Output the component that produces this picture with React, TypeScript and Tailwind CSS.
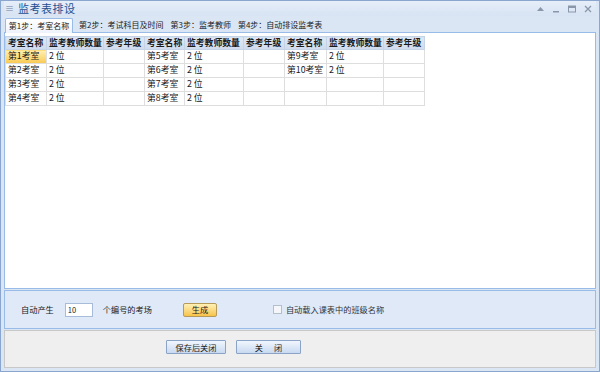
import React from "react";

const font = "font-['SimSun','Noto_Sans_CJK_SC',sans-serif]";

const cols = [41, 57, 41, 40, 59, 41, 42, 57, 41];
const heads = ["考室名称", "监考教师数量", "参考年级"];

const rows: string[][] = [
  ["第1考室", "2 位", "", "第5考室", "2 位", "", "第9考室", "2 位", ""],
  ["第2考室", "2 位", "", "第6考室", "2 位", "", "第10考室", "2 位", ""],
  ["第3考室", "2 位", "", "第7考室", "2 位", "", "", "", ""],
  ["第4考室", "2 位", "", "第8考室", "2 位", "", "", "", ""],
];

const tabs = ["第2步：考试科目及时间", "第3步：监考教师", "第4步：自动排设监考表"];

export default function App() {
  return (
    <div
      className={`w-[600px] h-[372px] flex flex-col px-[3px] pb-[3px] border border-[#8aa6cf] bg-[#dbe6f4] text-[#1a1a1a] ${font}`}
    >
      {/* title bar */}
      <div className="h-[15px] flex items-center bg-gradient-to-b from-[#e6eef9] to-[#d7e3f3]">
        <span className="text-[9px] leading-none text-[#6a7f9e] ml-[1px] mr-[4px]">≡</span>
        <span className="text-[11px] leading-none tracking-[0.5px] text-[#1f4f91]">监考表排设</span>
        <div className="ml-auto flex items-center gap-[8px] pr-[4px]">
          <svg width="7" height="5" viewBox="0 0 7 5">
            <path d="M0 5 L3.5 1 L7 5 Z" fill="#8a97aa" />
          </svg>
          <svg width="8" height="8" viewBox="0 0 8 8">
            <rect x="1" y="6" width="6" height="1.5" fill="#8a97aa" />
          </svg>
          <svg width="8" height="8" viewBox="0 0 8 8">
            <rect x="0.5" y="1" width="7" height="6" fill="none" stroke="#8a97aa" />
            <rect x="0.5" y="1" width="7" height="2" fill="#8a97aa" />
          </svg>
          <svg width="8" height="8" viewBox="0 0 8 8">
            <path d="M1 1 L7 7 M7 1 L1 7" stroke="#8a97aa" strokeWidth="1.3" />
          </svg>
        </div>
      </div>

      {/* tabs */}
      <div className="h-[16px] flex items-end text-[8px] leading-none">
        <div className="h-[15px] w-[68px] ml-[1px] flex items-center justify-center border border-b-0 border-[#99bbe8] bg-gradient-to-b from-[#ffffff] to-[#eef3fb] rounded-t-[2px] -mb-[1px] relative z-10">
          第1步：考室名称
        </div>
        {tabs.map((t, i) => (
          <div key={i} className="h-[15px] flex items-center pl-[6px] pr-[1px]">
            {t}
          </div>
        ))}
      </div>

      {/* grid panel */}
      <div className="h-[257px] border border-[#99bbe8] bg-white pt-[3px]">
        <table className="border-collapse table-fixed text-[8.8px] leading-none">
          <colgroup>
            {cols.map((w, i) => (
              <col key={i} style={{ width: w }} />
            ))}
          </colgroup>
          <thead>
            <tr className="h-[13px]">
              {cols.map((_, i) => (
                <th
                  key={i}
                  className="border border-[#c5d3e6] bg-gradient-to-b from-[#dfe8f4] to-[#cfdcee] font-bold text-left pl-[2px] whitespace-nowrap"
                >
                  {heads[i % 3]}
                </th>
              ))}
            </tr>
          </thead>
          <tbody>
            {rows.map((r, ri) => (
              <tr key={ri} className="h-[14px]">
                {r.map((c, ci) => (
                  <td
                    key={ci}
                    className={`border border-[#dedede] pl-[2px] whitespace-pre ${
                      ri === 0 && ci === 0
                        ? "bg-gradient-to-b from-[#fff0b0] to-[#f8c94e]"
                        : ""
                    }`}
                  >
                    {c}
                  </td>
                ))}
              </tr>
            ))}
          </tbody>
        </table>
      </div>

      {/* options panel */}
      <div className="h-[39px] mt-[1px] border border-[#99bbe8] bg-[#dfe9f8] flex items-center text-[8.2px] leading-none">
        <span className="ml-[16px]">自动产生</span>
        <div className="ml-[11px] w-[28px] h-[14px] border border-[#a7bcd8] bg-white flex items-center pl-[2px] text-[7.5px]">
          10
        </div>
        <span className="ml-[10px]">个编号的考场</span>
        <button className="ml-[31px] w-[34px] h-[14px] border border-[#b59a5a] rounded-[2px] bg-gradient-to-b from-[#fff1b5] to-[#f6c344] flex items-center justify-center text-[8.2px]">
          生成
        </button>
        <div className="ml-[56px] w-[9px] h-[9px] border border-[#b4bfcc] bg-[#f4f6f9]" />
        <span className="ml-[4px] text-[#333]">自动载入课表中的班级名称</span>
      </div>

      {/* footer */}
      <div className="flex-1 mt-[1px] border border-[#c8c8c8] bg-[#efefef] flex items-center pb-[4px] text-[8.2px] leading-none">
        <button className="ml-[161px] w-[60px] h-[14px] border border-[#8aa3c6] rounded-[1px] bg-gradient-to-b from-[#f1f6fd] to-[#c9daf1] flex items-center justify-center">
          保存后关闭
        </button>
        <button className="ml-[10px] w-[65px] h-[14px] border border-[#8aa3c6] rounded-[1px] bg-gradient-to-b from-[#f1f6fd] to-[#c9daf1] flex items-center justify-center whitespace-pre">
          关      闭
        </button>
      </div>
    </div>
  );
}
